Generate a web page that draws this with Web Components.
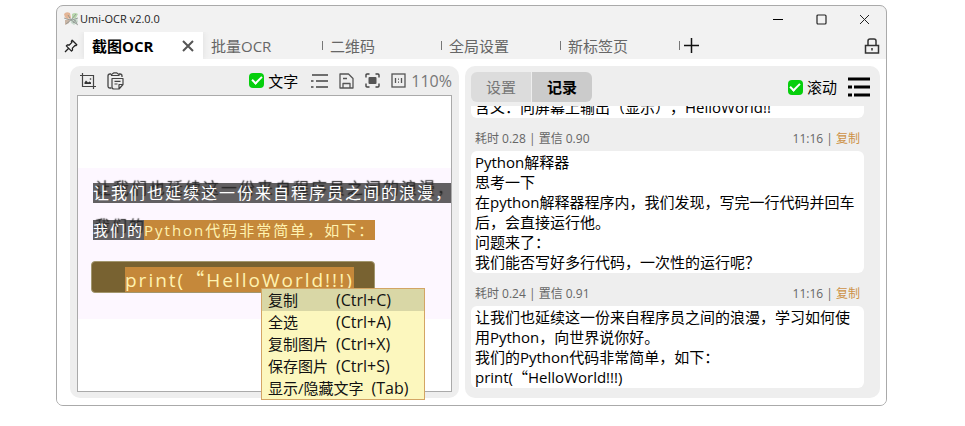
<!DOCTYPE html>
<html lang="zh-CN">
<head>
<meta charset="UTF-8">
<meta name="viewport" content="width=device-width, initial-scale=1">
<title>Umi-OCR</title>
<style>
  body {
    margin: 0;
    background: #fff;
    font-family: "Open Sans", "Noto Sans CJK SC", sans-serif;
    font-size: 15px;
    line-height: 20px;
    color: #000;
    text-spacing-trim: space-all;
  }
</style>
</head>
<body>
<umi-app></umi-app>

<script>
  const ICONS = {
    logo: `<svg viewBox="0 0 16 16" width="16" height="16"><path d="M1 3q2-3 6-1l1 5-4 1Q1 6 1 3z" fill="#e3b596"/><path d="M2 9l5-1-1 4-4 2z" fill="#c9b5a5"/><path d="M9 3q3-2 6 0l-2 4-4 1z" fill="#b9d8ae"/><path d="M7 8l7-1 1 4-4 3-3-2z" fill="#c9dacd"/><path d="M1 7l6 2M5 4l3 5 5-6M3 13l5-4 7 5M9 9l6-2M10 12l2-3 2 4" fill="none" stroke="#8b918d" stroke-width=".8"/></svg>`,
    min: `<svg viewBox="0 0 11 11" width="11" height="11"><path d="M0 5.5h10" stroke="#000"/></svg>`,
    max: `<svg viewBox="0 0 11 11" width="11" height="11"><rect x="1" y="1" width="9" height="9" rx="1" fill="none" stroke="#222" stroke-width="1.2"/></svg>`,
    close: `<svg viewBox="0 0 11 11" width="11" height="11"><path d="M1 1l9 9M10 1l-9 9" stroke="#222"/></svg>`,
    pin: `<svg viewBox="0 0 14 14" width="14" height="14"><path d="M8.2 1.2l4.600 4.600-1 .9-.8-.2-2.600 2.600.1 2-1 1L2.300 6.900l1-1 2 .1L7.900 3.400l-.5-1zM4.700 9.300L1 13" fill="none" stroke="#222" stroke-width="1.3" stroke-linejoin="round"/></svg>`,
    tabclose: `<svg viewBox="0 0 12 12" width="12" height="12"><path d="M1 1l10 10M11 1L1 11" stroke="#555" stroke-width="2"/></svg>`,
    plus: `<svg viewBox="0 0 15 15" width="15" height="15"><path d="M7.5 0v15M0 7.5h15" stroke="#111" stroke-width="1.5"/></svg>`,
    lock: `<svg viewBox="0 0 16 16" width="16" height="16"><path d="M1.5 7.5h13V15h-13zM4 7.500V3q0-2 2-2h4q2 0 2 2v4.500" fill="none" stroke="#333" stroke-width="1.5"/><path d="M8 10v2.500" stroke="#333" stroke-width="1.5"/></svg>`,
    shot: `<svg viewBox="0 0 16 16" width="16" height="16"><path d="M0 2.500h13.500V16M2.500 0v13.500H16" fill="none" stroke="#444" stroke-width="1.2"/><path d="M4.500 11V9.500l1.500-2 2 2 1.500-1 1.500 1V11z" fill="#333"/><circle cx="10.500" cy="6" r=".8" fill="#333"/></svg>`,
    paste: `<svg viewBox="0 0 17 18" width="17" height="18"><path d="M4.500 16H3q-2 0-2-2V4q0-2 2-2h1M12 2h1q2 0 2 2v1" fill="none" stroke="#444" stroke-width="1.3"/><path d="M4.500 3.500v-1L7 .8h2.500l2.500 1.700v1zM5 6.500h11v6L12 17H7q-2 0-2-2zM16 12.500h-4V17M7.500 9.300h6M7.500 12h3" fill="none" stroke="#444" stroke-width="1.2" stroke-linejoin="round"/></svg>`,
    list: `<svg viewBox="0 0 17 14" width="17" height="14"><path d="M1 1h16M0 7h2.500M5 7h12M0 13h2.500M5 13h12" stroke="#444" stroke-width="1.6"/></svg>`,
    save: `<svg viewBox="0 0 15 16" width="15" height="16"><path d="M1 1h8.500L14 5.500V15H1zM4 15v-4.500h7V15M4 5.500h4" fill="none" stroke="#555" stroke-width="1.3" stroke-linejoin="round"/></svg>`,
    fit: `<svg viewBox="0 0 15 15" width="15" height="15"><path d="M1 4.500V2q0-1 1-1h2.500M10.500 1H13q1 0 1 1v2.500M14 10.500V13q0 1-1 1h-2.500M4.500 14H2q-1 0-1-1v-2.500" fill="none" stroke="#444" stroke-width="1.4"/><rect x="3.500" y="4" width="8" height="7" rx="1" fill="#555"/></svg>`,
    actual: `<svg viewBox="0 0 15 15" width="15" height="15"><rect x="1" y="1" width="13" height="13" fill="none" stroke="#555" stroke-width="1.3"/><path d="M4.500 5v5M10.500 5v5" stroke="#555" stroke-width="1.3"/><path d="M7.500 5.500v1.300M7.500 8.500v1.300" stroke="#555"/></svg>`,
    menu: `<svg viewBox="0 0 22 20" width="22" height="20"><path d="M0 2h22M0 10h4M6 10h16M0 18h4M6 18h16" stroke="#000" stroke-width="2.800"/></svg>`
  };

  function define(name, css, html) {
    customElements.define(name, class extends HTMLElement {
      constructor() {
        super();
        this.attachShadow({ mode: 'open' });
      }

      connectedCallback() {
        const body = typeof html === 'function' ? html(this) : html;
        this.shadowRoot.innerHTML = `<style>${css}</style>${body}`;
      }
    });
  }

  // Icon button: <icon-button icon="pin" label="...">
  define('icon-button', `
    :host { display: flex; flex: none; }
    button {
      display: flex;
      padding: 0;
      border: none;
      background: none;
      cursor: pointer;
    }
  `, el => `<button aria-label="${el.getAttribute('label')}">${ICONS[el.getAttribute('icon')]}</button>`);

  define('check-option', `
    :host { display: block; flex: none; }
    label { display: flex; align-items: center; gap: 4px; }
    input {
      appearance: none;
      display: grid;
      place-items: center;
      width: 15px;
      height: 15px;
      margin: 0;
      border-radius: 4px;
      background: #ccc;
    }
    input:checked { background: #06cf0c; }
    input:checked::before {
      content: "";
      width: 8px;
      height: 4px;
      margin-bottom: 3px;
      border: solid #fff;
      border-width: 0 0 2px 2px;
      transform: rotate(-45deg);
    }
  `, `<label><input type="checkbox" checked><span><slot></slot></span></label>`);

  define('title-bar', `
    :host {
      display: flex;
      align-items: center;
      height: 26px;
      padding: 0 16px 0 6px;
      gap: 1px;
      font-size: 11px;
    }
    .title { flex: 1; color: #222; }
    .buttons { display: flex; gap: 32px; }
    svg { flex: none; }
  `, `
    ${ICONS.logo}
    <span class="title"><slot></slot></span>
    <div class="buttons">
      <icon-button icon="min" label="最小化"></icon-button>
      <icon-button icon="max" label="最大化"></icon-button>
      <icon-button icon="close" label="关闭"></icon-button>
    </div>
  `);

  define('page-tab', `
    :host {
      display: flex;
      flex: 0 1 119px;
      align-items: center;
      box-sizing: border-box;
      min-width: 0;
      padding: 0 9px 0 8px;
      color: #666;
    }
    :host([active]) { background: #fff; color: #000; font-weight: bold; box-shadow: 0 0 6px #ddd; }
    :host([divided]) { padding-left: 0; }
    :host([divided])::before {
      content: "";
      width: 1px;
      height: 9px;
      margin-right: 7px;
      background: #777;
    }
    button {
      flex: 1;
      padding: 0;
      border: none;
      background: none;
      font: inherit;
      color: inherit;
      text-align: left;
      white-space: nowrap;
    }
  `, el => `
    <button role="tab"><slot></slot></button>
    ${el.hasAttribute('active') ? '<icon-button icon="tabclose" label="关闭标签页"></icon-button>' : ''}
  `);

  define('tab-bar', `
    :host { display: flex; align-items: stretch; height: 27px; padding: 0 6px 0 7px; overflow: hidden; }
    .pin { align-self: center; margin-right: 6px; }
    .add { display: flex; align-items: center; gap: 4px; flex: 1; }
    .add::before { content: ""; width: 1px; height: 9px; background: #777; }
    .lock { align-self: center; }
  `, `
    <icon-button class="pin" icon="pin" label="置顶"></icon-button>
    <slot></slot>
    <div class="add"><icon-button icon="plus" label="新标签页"></icon-button></div>
    <icon-button class="lock" icon="lock" label="锁定"></icon-button>
  `);

  // Screenshot with the recognised text laid over it
  define('ocr-image', `
    :host {
      display: flex;
      align-items: center;
      overflow: hidden;
      border: 1px solid #aaa;
      background: #fff;
    }
    .shot {
      flex: 1;
      min-width: 0;
      box-sizing: border-box;
      padding: 15px 0 26px 15px;
      background: #fdf7ff;
      white-space: nowrap;
      color: #fff;
    }
    .line { width: max-content; background: #626062; letter-spacing: 2px; }
    .first { font-size: 16px; }
    .second { margin-top: 17px; }
    .dark { text-shadow: 2px -5px 1px #222; }
    .sel { display: inline-block; background: #c5883a; color: #fff2b0; }
    .code {
      width: 249px;
      margin: 21px 0 0 -2px;
      padding: 5px 0 0 33px;
      border: 1px solid #a2966d;
      border-radius: 4px;
      background: #786231;
      font-size: 19px;
      line-height: 24px;
      letter-spacing: 2px;
    }
    .code .sel { display: block; width: max-content; }
    .cjk { font-family: "Noto Sans CJK SC", sans-serif; }
  `, `
    <div class="shot">
      <div class="line first dark">让我们也延续这一份来自程序员之间的浪漫，学</div>
      <div class="line second"><span class="dark">我们的</span><span class="sel">Python代码非常简单，如下：</span></div>
      <div class="code"><span class="sel">print(<span class="cjk">“</span>HelloWorld!!!)</span></div>
    </div>
  `);

  define('menu-item', `
    :host { display: block; }
    button {
      display: flex;
      gap: 8px;
      width: 100%;
      padding: 1px 16px 1px 6px;
      border: none;
      background: none;
      font: inherit;
      color: #111;
      text-align: left;
      white-space: nowrap;
    }
    :host([hover]) button { background: #d9d7a6; }
    .label { min-width: 60px; }
    .key { font-size: 16px; }
  `, el => `
    <button role="menuitem"><span class="label"><slot></slot></span><span class="key">(${el.getAttribute('key')})</span></button>
  `);

  define('context-menu', `
    :host {
      display: block;
      border: 1px solid #d3a564;
      background: #fcf7be;
    }
  `, `<slot></slot>`);

  define('image-panel', `
    :host {
      display: flex;
      flex-direction: column;
      box-sizing: border-box;
      padding: 0 7px 6px;
      border-radius: 10px;
      background: #eee;
    }
    .tools { display: flex; align-items: center; height: 29px; padding-left: 3px; }
    .left, .right { display: flex; align-items: center; }
    .left { flex: 1; gap: 11px; }
    .right { gap: 11px; }
    check-option { margin-right: 2px; }
    .zoom { margin-left: -6px; font-size: 16px; color: #777; }
    .view { position: relative; display: flex; flex: 1; min-height: 0; }
    ocr-image { flex: 1; min-width: 0; }
    context-menu { position: absolute; left: 184px; top: 193px; }
  `, `
    <div class="tools">
      <div class="left">
        <icon-button icon="shot" label="截图"></icon-button>
        <icon-button icon="paste" label="粘贴"></icon-button>
      </div>
      <div class="right">
        <check-option>文字</check-option>
        <icon-button icon="list" label="列表"></icon-button>
        <icon-button icon="save" label="保存"></icon-button>
        <icon-button icon="fit" label="适应"></icon-button>
        <icon-button icon="actual" label="原始大小"></icon-button>
        <span class="zoom">110%</span>
      </div>
    </div>
    <div class="view">
      <ocr-image></ocr-image>
      <context-menu role="menu">
        <menu-item key="Ctrl+C" hover>复制</menu-item>
        <menu-item key="Ctrl+A">全选</menu-item>
        <menu-item key="Ctrl+X">复制图片</menu-item>
        <menu-item key="Ctrl+S">保存图片</menu-item>
        <menu-item key="Tab">显示/隐藏文字</menu-item>
      </context-menu>
    </div>
  `);

  define('result-card', `
    :host { display: block; flex: none; }
    .meta {
      display: flex;
      justify-content: space-between;
      height: 22px;
      padding: 11px 4px 0;
      font-size: 12px;
      color: #666;
    }
    a { color: #cd9246; text-decoration: none; }
    .text {
      padding: 1px 4px;
      border-radius: 6px;
      background: #fff;
    }
  `, el => `
    ${el.hasAttribute('time') ? `<div class="meta">
      <span>耗时 ${el.getAttribute('time')} | 置信 ${el.getAttribute('score')}</span>
      <span>11:16 | <a href="#">复制</a></span>
    </div>` : ''}
    <div class="text"><slot></slot></div>
  `);

  define('record-panel', `
    :host {
      display: flex;
      flex-direction: column;
      box-sizing: border-box;
      padding: 6px 10px 10px 6px;
      border-radius: 10px;
      background: #eee;
    }
    .head { display: flex; align-items: center; gap: 11px; }
    .tabs { display: flex; gap: 1px; flex: 1; }
    .tabs button {
      width: 60px;
      height: 30px;
      padding: 0;
      border: none;
      border-radius: 6px 0 0 6px;
      background: #dcdcdc;
      font: inherit;
      color: #777;
    }
    .tabs .on { border-radius: 0 6px 6px 0; background: #cbcbcb; color: #000; font-weight: bold; }
    .list {
      display: flex;
      flex: 1;
      flex-direction: column;
      justify-content: flex-end;
      min-height: 0;
      margin-top: 4px;
      padding-right: 6px;
      overflow: hidden;
    }
    p { margin: 0; }
    .cjk { font-family: "Noto Sans CJK SC", sans-serif; }
  `, `
    <div class="head">
      <div class="tabs" role="tablist">
        <button role="tab">设置</button>
        <button role="tab" class="on">记录</button>
      </div>
      <check-option>滚动</check-option>
      <icon-button icon="menu" label="菜单"></icon-button>
    </div>
    <div class="list">
      <result-card>
        <p>含义：向屏幕上输出（显示），HelloWorld!!</p>
      </result-card>
      <result-card time="0.28" score="0.90">
        <p>Python解释器</p>
        <p>思考一下</p>
        <p>在python解释器程序内，我们发现，写完一行代码并回车后，会直接运行他。</p>
        <p>问题来了：</p>
        <p>我们能否写好多行代码，一次性的运行呢？</p>
      </result-card>
      <result-card time="0.24" score="0.91">
        <p>让我们也延续这一份来自程序员之间的浪漫，学习如何使用Python，向世界说你好。</p>
        <p>我们的Python代码非常简单，如下：</p>
        <p>print(<span class="cjk">“</span>HelloWorld!!!)</p>
      </result-card>
    </div>
  `);

  define('umi-app', `
    :host {
      display: flex;
      box-sizing: border-box;
      height: 100vh;
      padding: 5px 78px 20px 56px;
    }
    .window {
      display: flex;
      flex: 1;
      flex-direction: column;
      min-width: 0;
      border: 1px solid #aaa;
      border-radius: 7px;
      overflow: hidden;
      background: #f2f2f2;
    }
    main {
      display: flex;
      flex: 1;
      gap: 6px;
      min-height: 0;
      padding: 7px 6px 7px 13px;
      background: #fff;
    }
    image-panel { flex: 389 1 0; min-width: 0; }
    record-panel { flex: 414 1 0; min-width: 0; }
  `, `
    <div class="window">
      <title-bar>Umi-OCR v2.0.0</title-bar>
      <tab-bar>
        <page-tab active>截图OCR</page-tab>
        <page-tab>批量OCR</page-tab>
        <page-tab divided>二维码</page-tab>
        <page-tab divided>全局设置</page-tab>
        <page-tab divided>新标签页</page-tab>
      </tab-bar>
      <main>
        <image-panel></image-panel>
        <record-panel></record-panel>
      </main>
    </div>
  `);
</script>
</body>
</html>
